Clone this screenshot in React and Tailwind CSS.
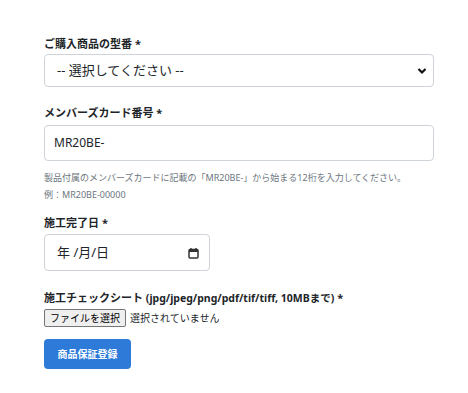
import React from "react";

const FONT = { fontFamily: '"Noto Sans", "Noto Sans CJK JP", sans-serif' };

function Label({ children }) {
  return (
    <div className="text-[11px] leading-[20px] font-bold text-[#212529]">
      {children} <span>*</span>
    </div>
  );
}

export default function App() {
  return (
    <div className="min-h-[393px] w-[468px] bg-white pl-[44px] pt-[34px] text-[#212529]" style={FONT}>
      <Label>ご購入商品の型番</Label>
      <div className="relative w-[390px] h-[33px] border border-[#ced4da] rounded-[4px] flex items-center pl-[12px]">
        <span className="text-[13px]">-- 選択してください --</span>
        <svg className="absolute right-[6px] top-[12px]" width="10" height="8" viewBox="0 0 10 8">
          <path d="M1.5 2 L5 5.5 L8.5 2" fill="none" stroke="#111" strokeWidth="2.2" />
        </svg>
      </div>

      <div className="mt-[16px]">
        <Label>メンバーズカード番号</Label>
      </div>
      <div className="mt-[2px] w-[390px] h-[36px] border border-[#ced4da] rounded-[4px] flex items-center pl-[9px]">
        <span className="text-[12px]">MR20BE-</span>
      </div>
      <div className="mt-[8px] text-[9px] leading-[17px] text-[#6c757d]">
        製品付属のメンバーズカードに記載の「MR20BE-」から始まる12桁を入力してください。
      </div>
      <div className="text-[9px] leading-[17px] text-[#6c757d]">例：MR20BE-00000</div>

      <div className="mt-[10px]">
        <Label>施工完了日</Label>
      </div>
      <div className="mt-[1px] w-[166px] h-[37px] border border-[#ced4da] rounded-[4px] flex items-center pl-[12px] pr-[10px] justify-between">
        <span className="text-[13px]">年 /月/日</span>
        <svg width="11" height="12" viewBox="0 0 11 12">
          <rect x="1" y="2.5" width="9" height="8.5" rx="1" fill="none" stroke="#333" strokeWidth="1.5" />
          <rect x="1" y="2.5" width="9" height="2.5" fill="#333" />
          <path d="M3 1v2M8 1v2" stroke="#333" strokeWidth="1.4" />
        </svg>
      </div>

      <div className="mt-[17px]">
        <Label>
          施工チェックシート <span className="text-[10.5px]">(jpg/jpeg/png/pdf/tif/tiff, 10MBまで)</span>
        </Label>
      </div>
      <div className="mt-[1px] flex items-center gap-[4px]">
        <button className="h-[18px] px-[5px] text-[10px] leading-none border border-[#767676] bg-[#efefef] rounded-[2px] text-black">
          ファイルを選択
        </button>
        <span className="text-[10px] text-[#212529]">選択されていません</span>
      </div>

      <button className="mt-[12px] w-[87px] h-[30px] rounded-[4px] bg-[#2d7ad8] text-white text-[10px] font-bold">
        商品保証登録
      </button>
    </div>
  );
}
